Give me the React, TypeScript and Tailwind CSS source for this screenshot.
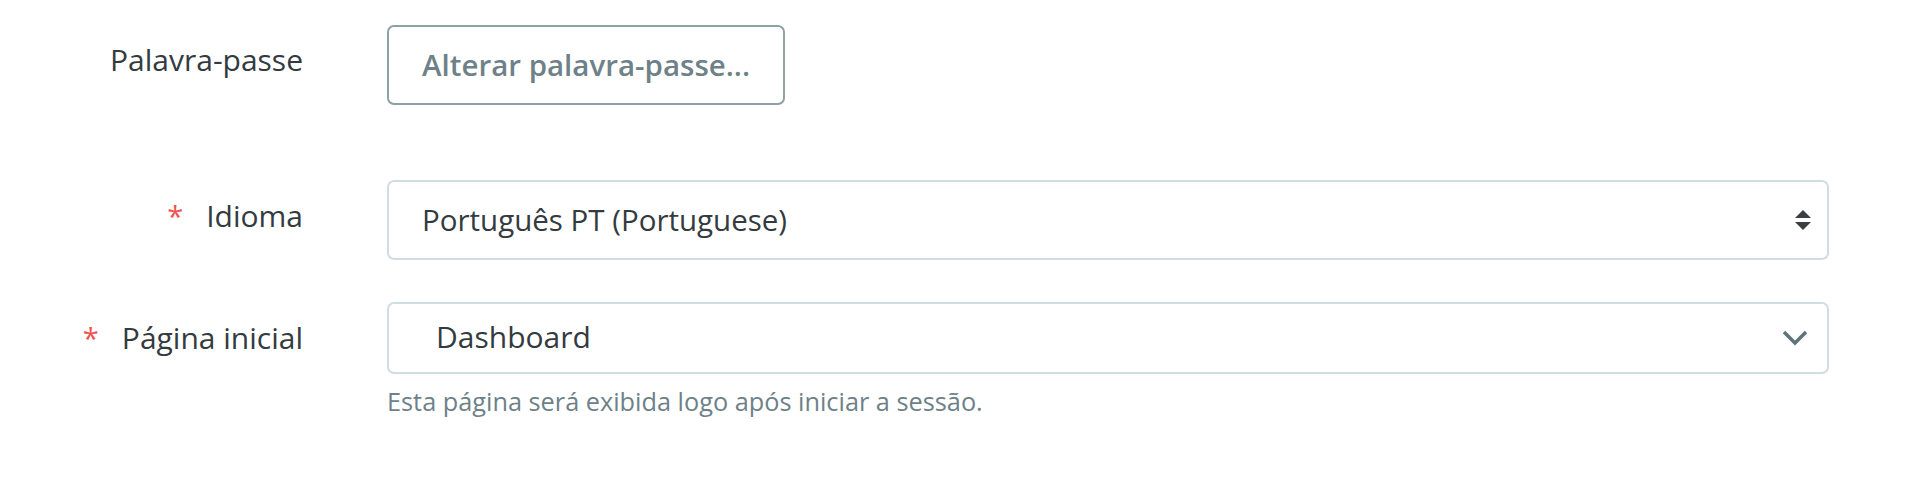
import React from "react";

const font = { fontFamily: "'Open Sans', 'Noto Sans', sans-serif" };

function Label({ text, required, lift }: { text: string; required?: boolean; lift: string }) {
  return (
    <div className={`w-[303px] shrink-0 flex items-center justify-end text-[30px] text-[#333b40] ${lift}`}>
      {required && <span className="text-[#f0524f] mr-[23px] text-[29px] leading-none">*</span>}
      <span>{text}</span>
    </div>
  );
}

export default function App() {
  return (
    <div className="w-[1920px] h-[481px] bg-white pt-[25px]" style={font}>
      {/* Password */}
      <div className="flex h-[80px]">
        <Label text="Palavra-passe" lift="pb-[11px]" />
        <div className="ml-[84px] flex items-center">
          <button className="h-[80px] w-[398px] rounded-[7px] border-2 border-[#8ea1a7] text-[29.5px] font-semibold text-[#6e8188] text-left pl-[33px]">
            Alterar palavra-passe...
          </button>
        </div>
      </div>

      {/* Language */}
      <div className="flex h-[80px] mt-[75px]">
        <Label text="Idioma" required lift="pb-[10px]" />
        <div className="ml-[84px] w-[1442px] h-[80px] rounded-[7px] border-2 border-[#d0dde1] flex items-center pl-[33px] pr-[15px]">
          <span className="flex-1 text-[29.5px] text-[#333b40]">Português PT (Portuguese)</span>
          <svg width="18" height="22" viewBox="0 0 18 22">
            <polygon points="9,1 17,9 1,9" fill="#3a3f44" />
            <polygon points="1,13 17,13 9,21" fill="#3a3f44" />
          </svg>
        </div>
      </div>

      {/* Start page */}
      <div className="flex h-[72px] mt-[42px]">
        <Label text="Página inicial" required lift="pb-[1px]" />
        <div className="ml-[84px] w-[1442px] h-[72px] rounded-[7px] border-2 border-[#d0dde1] flex items-center pl-[47px] pr-[19px]">
          <span className="flex-1 text-[30px] text-[#333b40] pb-[4px]">Dashboard</span>
          <svg width="26" height="16" viewBox="0 0 26 16">
            <polyline points="2,2 13,13 24,2" fill="none" stroke="#5e737a" strokeWidth="3.5" />
          </svg>
        </div>
      </div>
      <div className="flex">
        <div className="w-[303px] shrink-0" />
        <div className="ml-[84px] mt-[9px] text-[25.3px] text-[#6e8188]">
          Esta página será exibida logo após iniciar a sessão.
        </div>
      </div>
    </div>
  );
}
